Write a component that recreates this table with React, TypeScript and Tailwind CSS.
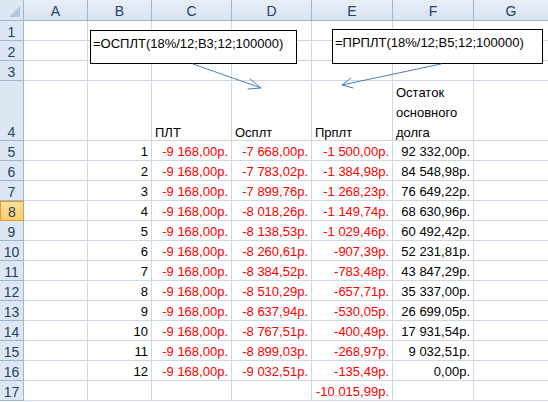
import React from 'react';

type Row = { n: number; plt: string; osn: string; prc: string; ost: string };

const rows: Row[] = [
  { n: 1, plt: '-9 168,00р.', osn: '-7 668,00р.', prc: '-1 500,00р.', ost: '92 332,00р.' },
  { n: 2, plt: '-9 168,00р.', osn: '-7 783,02р.', prc: '-1 384,98р.', ost: '84 548,98р.' },
  { n: 3, plt: '-9 168,00р.', osn: '-7 899,76р.', prc: '-1 268,23р.', ost: '76 649,22р.' },
  { n: 4, plt: '-9 168,00р.', osn: '-8 018,26р.', prc: '-1 149,74р.', ost: '68 630,96р.' },
  { n: 5, plt: '-9 168,00р.', osn: '-8 138,53р.', prc: '-1 029,46р.', ost: '60 492,42р.' },
  { n: 6, plt: '-9 168,00р.', osn: '-8 260,61р.', prc: '-907,39р.', ost: '52 231,81р.' },
  { n: 7, plt: '-9 168,00р.', osn: '-8 384,52р.', prc: '-783,48р.', ost: '43 847,29р.' },
  { n: 8, plt: '-9 168,00р.', osn: '-8 510,29р.', prc: '-657,71р.', ost: '35 337,00р.' },
  { n: 9, plt: '-9 168,00р.', osn: '-8 637,94р.', prc: '-530,05р.', ost: '26 699,05р.' },
  { n: 10, plt: '-9 168,00р.', osn: '-8 767,51р.', prc: '-400,49р.', ost: '17 931,54р.' },
  { n: 11, plt: '-9 168,00р.', osn: '-8 899,03р.', prc: '-268,97р.', ost: '9 032,51р.' },
  { n: 12, plt: '-9 168,00р.', osn: '-9 032,51р.', prc: '-135,49р.', ost: '0,00р.' },
];

const cell = 'border-r border-b border-[#d0d7e5] bg-white overflow-visible whitespace-nowrap';
const num = `${cell} flex items-end justify-end pr-[3px] pb-[1px] leading-[14px]`;
const label = `${cell} flex items-end pl-[3px] pb-0 leading-[14px]`;

const ColHead: React.FC<{ label: string }> = ({ label }) => (
  <div className="flex items-center justify-center pt-[1px] text-[14px] border-r border-b border-[#9eb6ce] bg-gradient-to-b from-[#e6eef8] to-[#d9e4f1] text-[#27415f]">
    {label}
  </div>
);

const RowHead: React.FC<{ n: number; active?: boolean }> = ({ n, active }) => (
  <div
    className={
      active
        ? 'flex items-end justify-center pb-[1px] leading-[14px] text-[14px] border border-[#f29436] bg-gradient-to-b from-[#fbe09a] to-[#f7cf6a] text-[#27415f]'
        : 'flex items-end justify-center pb-[1px] leading-[14px] text-[14px] border-r border-b border-[#9eb6ce] bg-[#dde7f3] text-[#27415f]'
    }
  >
    {n}
  </div>
);

const Blank = () => <div className={cell} />;

export default function App() {
  return (
    <div className="relative w-[548px] h-[402px] overflow-hidden bg-white text-[13px] leading-[18px] font-['Liberation_Sans',Arial,sans-serif]">
      <div className="grid grid-cols-[24px_64px_64px_80px_80px_81px_81px_75px] grid-rows-[21px_20px_20px_20px_60px_repeat(13,20px)]">
        {/* header row */}
        <div className="relative border-r border-b border-[#9eb6ce] bg-[#dde7f3]">
          <div className="absolute right-[3px] bottom-[3px] w-0 h-0 border-l-[11px] border-l-transparent border-b-[11px] border-b-[#b6c6da]" />
        </div>
        {['A', 'B', 'C', 'D', 'E', 'F', 'G'].map((c) => (
          <ColHead key={c} label={c} />
        ))}

        {/* rows 1-3 */}
        {[1, 2, 3].map((r) => (
          <React.Fragment key={r}>
            <RowHead n={r} />
            {Array.from({ length: 7 }).map((_, i) => (
              <Blank key={i} />
            ))}
          </React.Fragment>
        ))}

        {/* row 4 headings */}
        <RowHead n={4} />
        <Blank />
        <Blank />
        <div className={label}>ПЛТ</div>
        <div className={label}>Осплт</div>
        <div className={label}>Прплт</div>
        <div className={`${cell} flex flex-col justify-end gap-[6px] pl-[3px] pb-0 leading-[14px]`}>
          <span>Остаток</span>
          <span>основного</span>
          <span>долга</span>
        </div>
        <Blank />

        {/* data */}
        {rows.map((r) => (
          <React.Fragment key={r.n}>
            <RowHead n={r.n + 4} active={r.n + 4 === 8} />
            <Blank />
            <div className={`${num} text-black`}>{r.n}</div>
            <div className={`${num} text-[#ff0000]`}>{r.plt}</div>
            <div className={`${num} text-[#ff0000]`}>{r.osn}</div>
            <div className={`${num} text-[#ff0000]`}>{r.prc}</div>
            <div className={`${num} text-black`}>{r.ost}</div>
            <Blank />
          </React.Fragment>
        ))}

        {/* row 17 total */}
        <RowHead n={17} />
        <Blank />
        <Blank />
        <Blank />
        <Blank />
        <div className={`${num} text-[#ff0000]`}>-10 015,99р.</div>
        <Blank />
        <Blank />
      </div>

      {/* text boxes */}
      <div className="absolute left-[90px] top-[30px] w-[207px] h-[34px] border border-black bg-white pl-[2px] pt-[4px] whitespace-nowrap">
        =ОСПЛТ(18%/12;B3;12;100000)
      </div>
      <div className="absolute left-[332px] top-[29px] w-[211px] h-[35px] border border-black bg-white pl-[2px] pt-[4px] whitespace-nowrap">
        =ПРПЛТ(18%/12;B5;12;100000)
      </div>

      {/* arrows */}
      <svg className="absolute inset-0 pointer-events-none" width="548" height="402">
        <g stroke="#4a7ebb" strokeWidth="1" fill="none" strokeLinecap="round">
          <line x1="193" y1="64" x2="261" y2="88" />
          <polyline points="250,79 261,88 248,89" />
          <line x1="441" y1="64" x2="342" y2="85" />
          <polyline points="351,78 342,85 353,88" />
        </g>
      </svg>
    </div>
  );
}
